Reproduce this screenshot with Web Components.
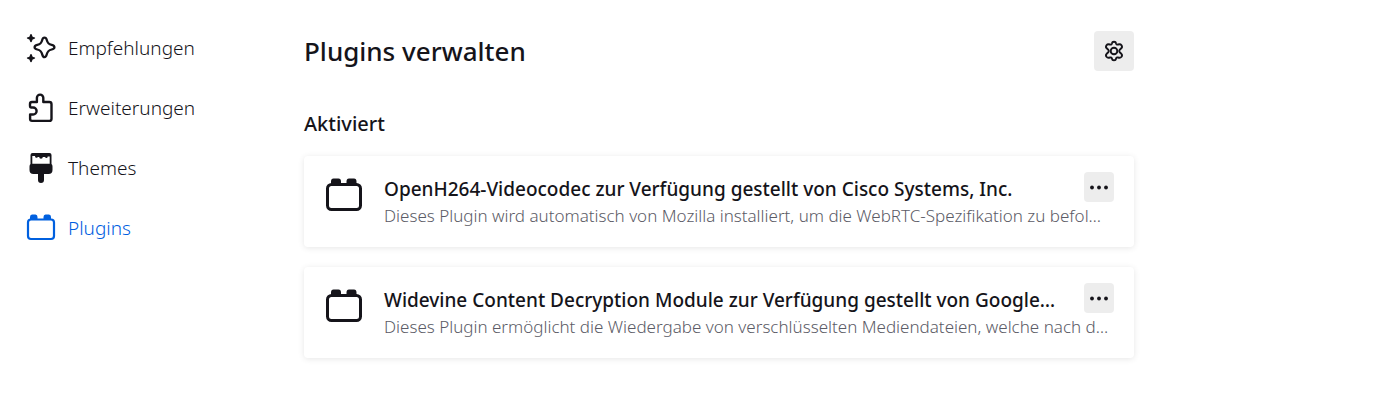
<!DOCTYPE html>
<html lang="de">
<head>
<meta charset="utf-8">
<title>Plugins verwalten</title>
<style>
  body {
    margin: 0;
    background: #fff;
    color: #15141a;
    font-family: "Noto Sans", "Open Sans", sans-serif;
    font-size: 19px;
    line-height: 28px;
  }
</style>
</head>
<body>
<addons-page></addons-page>
<script>
const ICONS = {
  brick: `<svg viewBox="0 0 36 36" aria-hidden="true"><path fill="currentColor" d="M5 9V5.500Q5 2.500 7.500 2.500h5Q15 2.500 15 5.500V9zM20.500 9V5.500Q20.500 2.500 23 2.500h5q2.500 0 2.500 3V9z"/><rect x="1.500" y="8.500" width="33" height="25" rx="4" fill="none" stroke="currentColor" stroke-width="3"/></svg>`,
  "brick-small": `<svg viewBox="0 0 30 30" aria-hidden="true"><path fill="currentColor" d="M4 7V4Q4 1.500 6 1.500h3.500q2 0 2 2.500V7zM17.500 7V4q0-2.500 2-2.500H23q2 0 2 2.500V7z"/><rect x="2" y="6.500" width="26" height="19.500" rx="3" fill="none" stroke="currentColor" stroke-width="2.200"/></svg>`,
  sparkle: `<svg viewBox="0 0 30 30" aria-hidden="true"><path d="M18.500 4.700c1.300 0 1.900.9 2.200 2.100.8 3.300 1.700 4.300 5 5.100 1.600.4 2.700 1.100 2.700 2.300s-1.100 1.900-2.700 2.300c-3.300.8-4.200 1.800-5 5.100-.3 1.200-.9 2.500-2.200 2.500s-1.900-1.300-2.200-2.500c-.8-3.300-1.700-4.300-5-5.100-1.600-.4-2.700-1.100-2.700-2.300s1.100-1.900 2.700-2.300c3.300-.8 4.200-1.800 5-5.100.3-1.200.9-2.100 2.200-2.100z" fill="none" stroke="currentColor" stroke-width="2.300"/><path fill="currentColor" d="M5 1q.8 0 1 1.200.3 1.800 2 2 1.200.2 1.200.9T8 6q-1.700.2-2 2Q5.800 9.200 5 9.200T4 8Q3.700 6.200 2 6 .8 5.800.8 5.100T2 4.200q1.700-.2 2-2Q4.200 1 5 1zM5 21q.8 0 1 1.200.3 1.800 2 2 1.200.2 1.200.9T8 26q-1.700.2-2 2-.2 1.200-1 1.200T4 28q-.3-1.800-2-2-1.200-.2-1.200-.9T2 24.200q1.700-.2 2-2Q4.200 21 5 21z"/></svg>`,
  puzzle: `<svg viewBox="0 0 30 30" aria-hidden="true"><path d="M4 12.500V11q0-2 2-2h4.900V4.800a3.200 3.200 0 0 1 6.400 0V9h6q2.200 0 2.200 2.200v14.500q0 2.200-2.200 2.200H6q-1.900 0-1.900-1.900v-4.500h3a3.500 3.500 0 0 0 0-7H5.200q-1.200 0-1.200-2z" fill="none" stroke="currentColor" stroke-width="2.400" stroke-linejoin="round"/></svg>`,
  brush: `<svg viewBox="0 0 30 30" aria-hidden="true"><path fill="currentColor" fill-rule="evenodd" d="M6.500 0h17q2 0 2 2v9q1 .8 1 2.500V17q0 4-4 4H18v6a3 3 0 0 1-6 0v-6H7.500q-4 0-4-4v-3.500q0-1.700 1-2.500V2q0-2 2-2zM6.300 3v7.700h17.400V3.500h-2a1.300 1.300 0 0 1-2.600.400h-2.300a1.800 1.800 0 0 1-3.600 0h-1.500a1.300 1.300 0 0 1-2.600-.9z"/></svg>`,
  gear: `<svg viewBox="0 0 22 22" aria-hidden="true"><g fill="none" stroke="currentColor" stroke-width="1.900" stroke-linejoin="round"><path d="M9 3.200Q9.200 1.700 11 1.700T13 3.200q.4 1.700 2 1.300 2.300-.9 3.500.7 1.200 1.900-.3 3.200-2 1.300-2 2.600t2 2.600q1.500 1.300.3 3.200-1.200 1.600-3.500.7-1.600-.4-2 1.300-.2 1.500-2 1.500T9 18.800q-.4-1.700-2-1.300-2.300.9-3.500-.7-1.200-1.900.3-3.200 2-1.300 2-2.600t-2-2.600Q2.300 7.100 3.500 5.200 4.700 3.600 7 4.500q1.600.4 2-1.300z"/><circle cx="11" cy="11" r="3.300"/></g></svg>`,
  more: `<svg viewBox="0 0 20 20" aria-hidden="true"><g fill="currentColor"><circle cx="3" cy="10.500" r="1.900"/><circle cx="10" cy="10.500" r="1.900"/><circle cx="17" cy="10.500" r="1.900"/></g></svg>`
};

function define(name, html) {
  customElements.define(name, class extends HTMLElement {
    constructor() {
      super();
      const template = document.createElement("template");
      template.innerHTML = html;
      this.attachShadow({ mode: "open" }).append(template.content.cloneNode(true));
    }
  });
}

customElements.define("addon-icon", class extends HTMLElement {
  connectedCallback() {
    if (this.shadowRoot) return;
    this.attachShadow({ mode: "open" }).innerHTML = `
      <style>:host { display: block; flex: none; } svg { display: block; width: 100%; height: 100%; }</style>
      ${ICONS[this.getAttribute("name")]}`;
  }
});

customElements.define("nav-item", class extends HTMLElement {
  connectedCallback() {
    if (this.shadowRoot) return;
    this.attachShadow({ mode: "open" }).innerHTML = `
      <style>
        :host { display: block; }
        a { display: flex; align-items: center; gap: 12px; height: 60px; color: inherit; text-decoration: none; }
        addon-icon { width: 30px; height: 30px; }
        :host([selected]) { color: #0060df; }
      </style>
      <a href="#"${this.hasAttribute("selected") ? ' aria-current="page"' : ""}><addon-icon name="${this.getAttribute("icon")}"></addon-icon><slot></slot></a>`;
  }
});

customElements.define("icon-button", class extends HTMLElement {
  connectedCallback() {
    if (this.shadowRoot) return;
    this.attachShadow({ mode: "open" }).innerHTML = `
      <style>
        :host { display: block; flex: none; }
        button { display: grid; place-items: center; width: 30px; height: 30px; padding: 0; border: 0; border-radius: 4px; background: #ededed; color: #15141a; }
        addon-icon { width: 20px; height: 20px; }
        :host([large]) button { width: 40px; height: 40px; }
        :host([large]) addon-icon { width: 22px; height: 22px; }
      </style>
      <button type="button" aria-label="${this.getAttribute("label")}"><addon-icon name="${this.getAttribute("icon")}"></addon-icon></button>`;
  }
});

define("addon-sidebar", `
  <style>
    :host { display: block; font-weight: 300; }
    nav { padding: 18px 0 0 26px; }
  </style>
  <nav>
    <nav-item icon="sparkle">Empfehlungen</nav-item>
    <nav-item icon="puzzle">Erweiterungen</nav-item>
    <nav-item icon="brush">Themes</nav-item>
    <nav-item icon="brick-small" selected>Plugins</nav-item>
  </nav>`);

define("addon-card", `
  <style>
    :host { display: block; }
    article { display: flex; gap: 22px; padding: 16px 20px 17px 22px; border-radius: 4px; background: #fff; box-shadow: 0 1px 6px rgba(12, 12, 13, 0.1); }
    addon-icon { width: 36px; height: 36px; margin-top: 4px; }
    .body { flex: 1; min-width: 0; }
    .top { display: flex; justify-content: space-between; gap: 16px; height: 30px; }
    h3 { margin: 0; min-width: 0; font-size: 19px; font-weight: 500; line-height: 34px; white-space: nowrap; }
    p { margin: 0; color: #5b5b66; font-size: 17px; font-weight: 300; line-height: 28px; white-space: nowrap; }
  </style>
  <article>
    <addon-icon name="brick"></addon-icon>
    <div class="body">
      <div class="top"><h3><slot name="title"></slot></h3><icon-button icon="more" label="Weitere Optionen"></icon-button></div>
      <p><slot></slot></p>
    </div>
  </article>`);

define("addons-page", `
  <style>
    :host { display: grid; grid-template-columns: 304px minmax(0, 830px); }
    main { padding: 31px 0 40px; }
    header { display: flex; align-items: center; justify-content: space-between; }
    h1 { margin: 0; font-size: 26px; font-weight: 500; line-height: 40px; }
    h2 { margin: 38px 0 17px; font-size: 20px; font-weight: 500; line-height: 30px; }
    section { display: grid; gap: 20px; }
  </style>
  <addon-sidebar></addon-sidebar>
  <main>
    <header><h1>Plugins verwalten</h1><icon-button large icon="gear" label="Werkzeuge für alle Add-ons"></icon-button></header>
    <h2>Aktiviert</h2>
    <section>
      <addon-card><span slot="title">OpenH264-Videocodec zur Verfügung gestellt von Cisco Systems, Inc.</span>Dieses Plugin wird automatisch von Mozilla installiert, um die WebRTC-Spezifikation zu befol…</addon-card>
      <addon-card><span slot="title">Widevine Content Decryption Module zur Verfügung gestellt von Google…</span>Dieses Plugin ermöglicht die Wiedergabe von verschlüsselten Mediendateien, welche nach d…</addon-card>
    </section>
  </main>`);
</script>
</body>
</html>
